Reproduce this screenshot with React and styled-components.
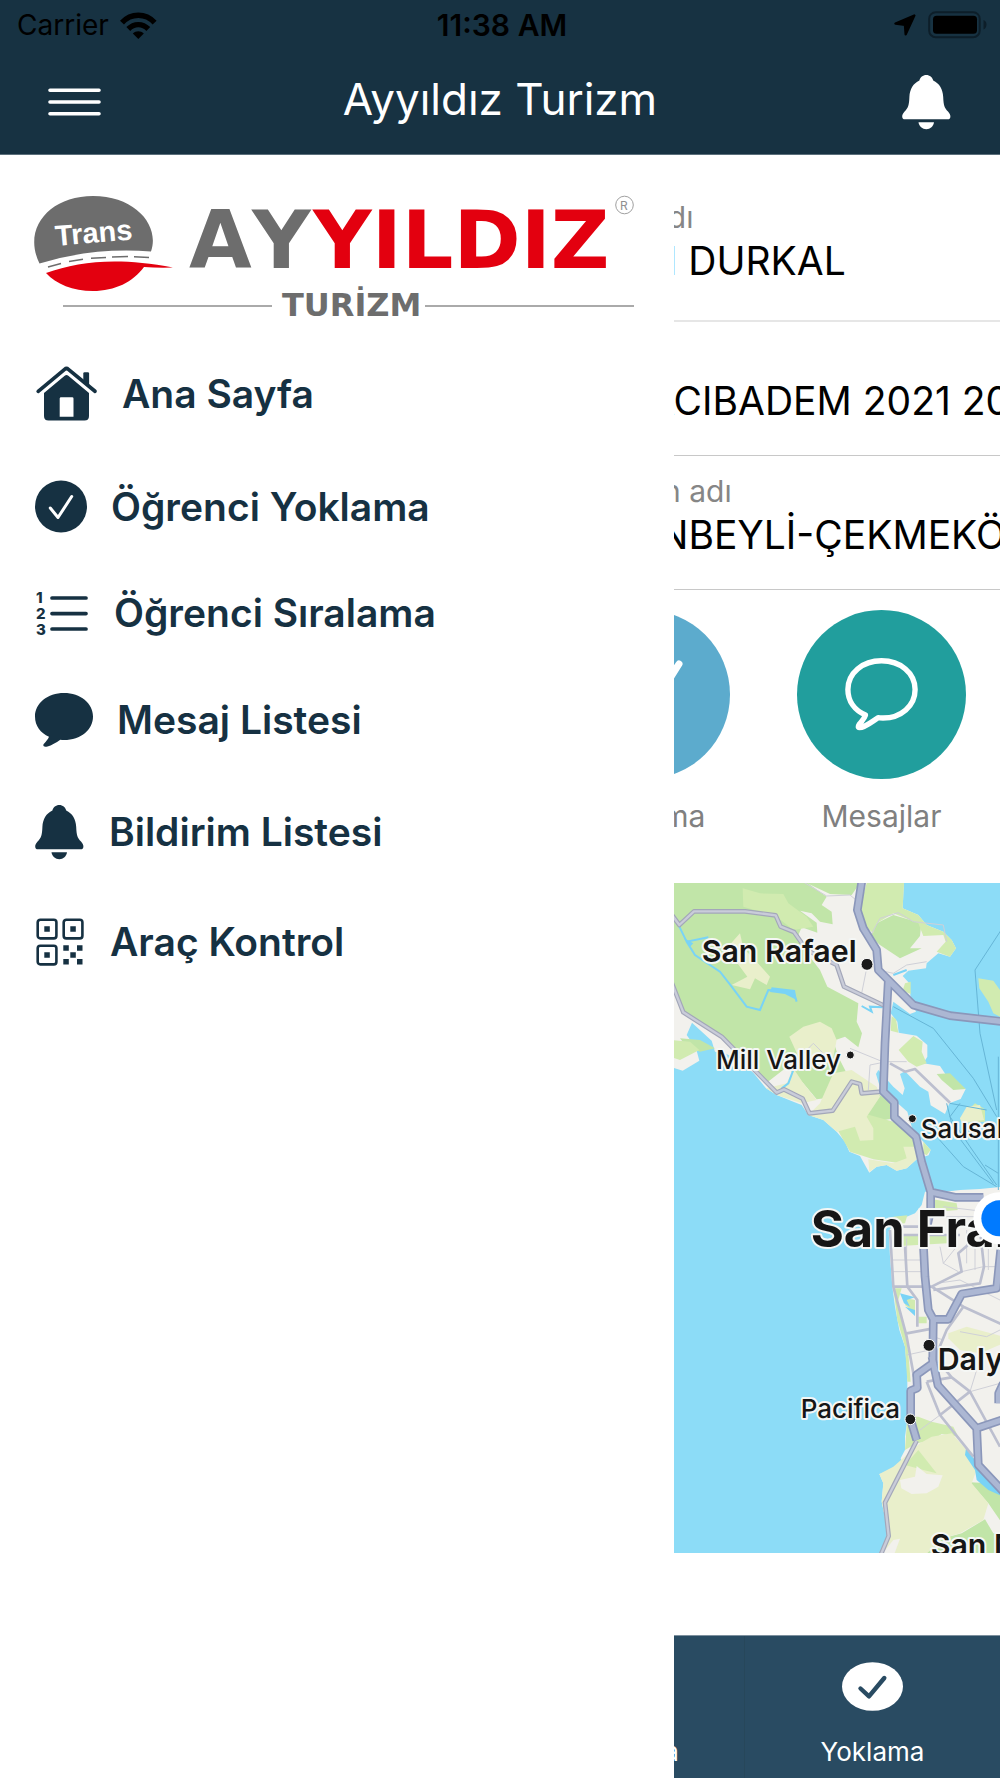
import React from 'react';
import styled, { createGlobalStyle } from 'styled-components';

const GlobalStyle = createGlobalStyle`
  * {
    box-sizing: border-box;
  }

  body {
    margin: 0;
    background: #ffffff;
    font-family: Inter, 'Liberation Sans', sans-serif;
    color: #000000;
  }

  svg {
    display: block;
    flex-shrink: 0;
  }
`;

const Screen = styled.div`
  display: flex;
  flex-direction: column;
  min-height: 100vh;
`;

const Header = styled.header`
  background-color: #173242;
  border-bottom: 1px solid #5b6f7b;
`;

const StatusBar = styled.div`
  display: grid;
  grid-template-columns: 1fr auto 1fr;
  align-items: center;
  height: 50px;
  padding: 0 13px 0 17px;
  font-size: 28px;
`;

const StatusGroup = styled.div`
  display: flex;
  align-items: center;
  justify-content: ${(props) => (props.$end ? 'flex-end' : 'flex-start')};
  gap: 11px;
`;

const Clock = styled.time`
  font-size: 30px;
  font-weight: 600;
`;

const NavBar = styled.div`
  display: grid;
  grid-template-columns: 1fr auto 1fr;
  align-items: center;
  height: 104px;
  padding: 0 48px;
`;

const NavTitle = styled.h1`
  margin: 0;
  padding-bottom: 6px;
  font-size: 44px;
  font-weight: 400;
  line-height: 56px;
  color: #ffffff;
`;

const IconButton = styled.button`
  justify-self: ${(props) => (props.$end ? 'end' : 'start')};
  padding: 0;
  border: none;
  background: none;
  color: #ffffff;
  cursor: pointer;
`;

const Body = styled.div`
  display: grid;
  grid-template-columns: 67.4% minmax(0, 1fr);
  flex: 1;
`;

const Drawer = styled.aside`
  padding: 36px 40px 40px 35px;
`;

const Menu = styled.nav`
  display: flex;
  flex-direction: column;
  align-items: flex-start;
  gap: 56px;
  padding-top: 37px;
`;

const MenuLink = styled.a`
  display: flex;
  align-items: center;
  gap: 24px;
  font-size: 39px;
  font-weight: 600;
  line-height: 48px;
  color: #163142;
  text-decoration: none;
  white-space: nowrap;
`;

const Content = styled.main`
  display: flex;
  flex-direction: column;
  overflow: hidden;
`;

const InfoRow = styled.section`
  padding: ${(props) => (props.$first ? '42px 0 35px' : '15px 0 30px')};
  border-bottom: ${(props) => (props.$first ? '2px solid #e6e6e6' : '1px solid #c8c8c8')};
  white-space: nowrap;
`;

// $under is how far the line runs below the open drawer
const InfoLabel = styled.div`
  min-height: 40px;
  margin-left: ${(props) => -props.$under}px;
  font-size: 30px;
  line-height: 40px;
  color: #868686;
`;

const InfoValue = styled.div`
  margin-left: ${(props) => -props.$under}px;
  font-size: 39px;
  line-height: 48px;
`;

const Shortcuts = styled.div`
  display: flex;
  justify-content: flex-end;
  gap: 67px;
  padding: 20px 34px 45px 0;
`;

const Shortcut = styled.button`
  display: flex;
  flex-direction: column;
  align-items: center;
  flex-shrink: 0;
  gap: 15px;
  padding: 0;
  border: none;
  background: none;
  font: inherit;
  font-size: 30px;
  line-height: 44px;
  color: #808080;
  cursor: pointer;
`;

const ShortcutDisc = styled.span`
  display: grid;
  place-items: center;
  width: 169px;
  height: 169px;
  border-radius: 50%;
  background-color: ${(props) => props.$color};
`;

const MapBox = styled.div`
  flex: 1;
  min-height: 0;
  margin-bottom: 82px;

  svg {
    width: 100%;
    height: 100%;
  }
`;

const TabBar = styled.nav`
  display: flex;
  justify-content: flex-end;
  height: 144px;
  background-color: #294b62;
  border-top: 1px solid #7d909e;
`;

const Tab = styled.a`
  display: flex;
  flex-direction: column;
  align-items: center;
  flex: 0 0 256px;
  gap: 23px;
  padding-top: 26px;
  border-left: 1px solid #27475a;
  font-size: 26px;
  line-height: 36px;
  color: #ffffff;
  text-decoration: none;
`;

const WifiIcon = () => (
  <svg width="37" height="27" viewBox="0 0 37 27" fill="none" stroke="#000" strokeWidth="5.4">
    <path d="M2 10.6C11 .8 25.600 .8 34.600 10.600" />
    <path d="M8.300 17C14 11.200 22.600 11.200 28.300 17" />
    <path d="M18.300 27L12.800 21.600C16 18.400 20.600 18.400 23.800 21.600Z" fill="#000" stroke="none" />
  </svg>
);

const LocationIcon = () => (
  <svg width="22" height="22" viewBox="0 0 22 22">
    <path
      d="M20.300 1.500L1.500 9.500L11 10.800L11.700 20.300Z"
      fill="#000"
      stroke="#000"
      strokeWidth="2.400"
      strokeLinejoin="round"
    />
  </svg>
);

const BatteryIcon = () => (
  <svg width="60" height="28" viewBox="0 0 60 28">
    <rect x="2.200" y="1.200" width="50.500" height="25" rx="6.500" fill="none" stroke="#0d1e29" strokeWidth="2" />
    <rect x="6" y="4.700" width="44" height="18" rx="3.500" fill="#000" />
    <path d="M56.500 9C60.500 10 60.500 17 56.500 18.500Z" fill="#0d1e29" />
  </svg>
);

const MenuIcon = () => (
  <svg width="53" height="28" viewBox="0 0 53 28" stroke="#fff" strokeWidth="3.600" strokeLinecap="round">
    <path d="M2 2.200H51M2 14H51M2 25.700H51" />
  </svg>
);

const BellIcon = () => (
  <svg width="50" height="58" viewBox="0 -2 50 58" fill="currentColor">
    <path d="M24.300 0C27.800 0 30.300 2.300 31.200 5.500C37.300 8.300 40.800 14 41.200 22C41.600 30.500 42.300 32.600 46 36.600C47.800 38.600 48.400 40 48.400 41.700C48.400 43.400 47.300 44.300 45.600 44.300H3C1.300 44.300 .2 43.400 .2 41.700C.2 40 .8 38.600 2.600 36.600C6.300 32.600 7 30.500 7.400 22C7.800 14 11.300 8.300 17.400 5.500C18.300 2.300 20.800 0 24.300 0Z" />
    <path d="M16.500 47.300H32C31.500 51.500 28.200 54.200 24.300 54.200S17 51.500 16.500 47.300Z" />
  </svg>
);

const HomeIcon = () => (
  <svg width="63" height="60" viewBox="0 -1 63 60" fill="currentColor">
    <path
      d="M3.200 26.300L29.600 4.300Q31.500 2.700 33.400 4.300L60 26.300"
      fill="none"
      stroke="currentColor"
      strokeWidth="3.700"
      strokeLinecap="round"
    />
    <path d="M48.300 15V8.600Q48.300 7.300 49.600 7.300H52.800Q54.100 7.300 54.100 8.600V20.500Z" />
    <path
      fillRule="evenodd"
      d="M9 28L29.700 10.800Q31.500 9.300 33.300 10.800L54 28V51Q54 55.500 49.500 55.500H13.500Q9 55.500 9 51ZM26 32.300Q24.700 32.300 24.700 33.600V51.700H38.500V33.600Q38.500 32.300 37.200 32.300Z"
    />
  </svg>
);

const CheckIcon = () => (
  <svg width="52" height="53" viewBox="0 0 52 53">
    <circle cx="26" cy="26.500" r="26" fill="currentColor" />
    <path
      d="M15.300 28L23 37.500L36.700 16.500"
      fill="none"
      stroke="#fff"
      strokeWidth="3"
      strokeLinecap="round"
      strokeLinejoin="round"
    />
  </svg>
);

const NumberedListIcon = () => (
  <svg width="55" height="48" viewBox="0 0 55 48" fill="currentColor" overflow="visible">
    <path d="M17 9H51M17 24.600H51M17 40H51" stroke="currentColor" strokeWidth="3.700" strokeLinecap="round" />
    <g fontSize="15" fontWeight="800">
      <text x="1" y="14">1</text>
      <text x="1" y="30">2</text>
      <text x="1" y="46">3</text>
    </g>
  </svg>
);

const ChatIcon = () => (
  <svg width="58" height="54" viewBox="0 0 58 54" fill="currentColor">
    <path d="M29 0C45.500 0 58 10.300 58 23.500S46 47 29 47C27.800 47 26.500 47 25.300 46.700C21 49.700 16.500 52.400 12.500 53.400C10 54 8.300 53.700 8.300 52.300C8.300 50.500 12.500 48 14 43.800C5.500 40 0 33 0 23.500C0 10.300 12.500 0 29 0Z" />
  </svg>
);

const QrIcon = () => (
  <svg width="51" height="50" viewBox="0 0 51 50" fill="currentColor">
    <g fill="none" stroke="currentColor" strokeWidth="2.600">
      <rect x="2.700" y="2.700" width="18.700" height="18.700" rx="2.600" />
      <rect x="28.700" y="2.700" width="18.700" height="18.700" rx="2.600" />
      <rect x="2.700" y="28.700" width="18.700" height="18.700" rx="2.600" />
    </g>
    <path d="M9.300 9.300h5.500v5.500h-5.500zM35.300 9.300h5.500v5.500h-5.500zM9.300 35.300h5.500v5.500h-5.500z" />
    <path d="M28.300 28.300h5.500v5.500h-5.500zM42 28.300h5.500v5.500h-5.500zM35.300 35.200h5.500v5.500h-5.500zM28.300 42h5.500v5.500h-5.500zM42 42h5.500v5.500h-5.500z" />
  </svg>
);

const ChatOutlineIcon = () => (
  <svg width="73" height="73" viewBox="0 0 73 73" fill="none" stroke="#fff" strokeWidth="5.400" strokeLinejoin="round">
    <path d="M20.500 57C9.500 52.300 2.900 43 2.900 31.500C2.900 15 17.500 2.800 36.500 2.800S70.100 15 70.100 31.500S56 60 38 60C36 60 34.500 60 33 59.700C27 63.500 20 69.500 14.500 69.600C12.500 69.600 13.500 67.500 14.500 66C17 62.800 19.500 60.500 20.500 57Z" />
  </svg>
);

const CheckMarkIcon = () => (
  <svg width="74" height="74" viewBox="0 0 74 74" fill="none" stroke="#fff" strokeWidth="7" strokeLinecap="round">
    <path d="M16 42L32 66L70 6" strokeLinejoin="round" />
  </svg>
);

const TabCheckIcon = () => (
  <svg width="61" height="49" viewBox="0 0 61 49">
    <ellipse cx="30.500" cy="24.500" rx="30.500" ry="24.300" fill="#fff" />
    <path
      d="M18.500 26.500L27 34.300L42.300 16"
      fill="none"
      stroke="#294b62"
      strokeWidth="4.400"
      strokeLinecap="round"
      strokeLinejoin="round"
    />
  </svg>
);

const Logo = () => (
  <svg width="100%" viewBox="35 191 599 136" role="img" aria-label="Ayyıldız Turizm" overflow="visible">
    <path d="M39.500 263.500C22 228 50 196 93 196S160 226 151 251.500Q93 247 39.500 263.500Z" fill="#6d6d6d" />
    <path d="M46 273C80 261 118 257 173 267.500Q158 268 144 267C133 282 115 291 93 291C73 291 56 284 46 273Z" fill="#e3000f" />
    <path
      d="M48 267L61 263.500M69 261.500L83 259.200M91 258.200L106 257.500M112 257L128 256.500M134 256.800L149 257.400"
      stroke="#6d6d6d"
      strokeWidth="1.500"
    />
    <text
      x="56"
      y="246"
      fill="#fff"
      fontFamily="'Liberation Sans', sans-serif"
      fontSize="29"
      fontWeight="700"
      transform="rotate(-5 56 246)"
    >
      Trans
    </text>
    <g fontFamily="'DejaVu Sans', sans-serif" fontWeight="700">
      <text x="189 252" y="268" fill="#6d6d6d" fontSize="81">AY</text>
      <text x="313" y="268" fill="#e3000f" fontSize="81">YILDIZ</text>
      <text x="282" y="316" fill="#6d6d6d" fontSize="32">TURİZM</text>
    </g>
    <path d="M63 306H272M425 306H634" stroke="#8e8e8e" strokeWidth="1.500" />
    <circle cx="624.500" cy="205" r="8.800" fill="none" stroke="#a0a0a0" />
    <text x="620" y="209.500" fill="#909090" fontSize="12">R</text>
  </svg>
);

const majorRoads =
  'M606 30L592 120L610 175L650 240L655 300L685 330L760 405L870 437L1030 455M685 330L675 520L670 665L703 697L703 742L768 800L785 875L812 966L885 982L970 982M812 966V1020L790 1120L795 1220L805 1320L820 1348H865L905 1272L1010 1255L1022 1140M820 1348L818 1480L770 1514L772 1554L752 1562V1650L770 1710M816 1460L834 1546L950 1675L955 1785L1030 1865M950 1675L1030 1648M1030 1540L1016 1570V1600';

const mediumRoads =
  'M36 135L58 165L102 124H255L347 136L362 170L402 186L440 240L530 285L552 350L675 408M36 340L70 427L185 500L350 668L372 658L428 686L448 730L518 722L575 635L600 642L605 670L665 665M770 1712L675 1898L686 1998L660 2060';

const streets =
  'M690 1080L700 1250L740 1400L762 1520M735 1130L742 1250L772 1290V1370M700 1250L815 1250L905 1205L895 1150L930 1120M740 1390L820 1375M815 1250L910 1310L1030 1365M910 1310L860 1380L835 1440L832 1480M700 1070H830M720 1095H900M960 1080L972 1190L960 1240L820 1260M800 1535L875 1522L930 1565L1020 1730M800 1535L840 1635L940 1760M930 1565L840 1635M875 1522L840 1480M690 580L735 605L765 597L870 698';

const BayMap = () => (
  <svg viewBox="42 39 978 2010" preserveAspectRatio="xMinYMin slice" role="img" aria-label="Harita">
    <rect x="0" y="0" width="1200" height="2200" fill="#8cdcf7" />

    {/* urban ground */}
    <g fill="#f2f1ed">
      <path d="M30 30H732L728 115L775 135L800 165L850 185L875 210L888 235L870 260L835 250L800 280L798 295L745 302L728 318L748 340L752 385L768 425L750 432L700 395L692 430L712 455L716 488L770 497L802 525V560L790 580L840 588L860 618L917 657L902 687L868 700L855 732L812 706L805 665L780 650L735 604L720 612L734 655L728 675L700 650L655 600L648 612L658 645L702 690L742 725L758 780L790 815L812 840L806 856L772 866L740 895L710 902L680 885L650 890L628 908L612 880L600 858L568 845L555 815L530 785L490 750L445 735L425 705L400 695L350 675L318 655L280 608L240 575L200 552L165 545L155 512L96 458L80 495L108 535L118 572L68 602L30 590Z" />
      <path d="M795 965L850 966L900 960L960 957L1030 950V2060H655L685 1990L665 1895L670 1840L658 1812L700 1805L728 1785L722 1765L735 1740V1700L742 1650V1510L735 1430L718 1380L705 1310L697 1250L690 1160L686 1085L700 1060L740 1040L765 1030L785 1005Z" />
    </g>

    {/* parks and hills */}
    <g fill="#c1e5a8">
      <path d="M30 30H430L500 80L485 105L515 125L518 163L480 155L455 130L420 122L470 158L472 188L425 172L413 200L432 238L480 300L502 350L595 400L590 455L606 490L595 532L555 500L520 512L535 560L560 610L530 680L470 688L430 640L380 592L318 640L240 545L180 495L70 425L30 340Z" />
      <path d="M440 39H600L575 75L510 72Z" />
      <path d="M650 160L700 135L784 160L780 198L750 235L785 235L720 265L660 225L632 200Z" />
      <path d="M615 735L655 672L700 700L705 745L660 752Z" />
      <path d="M830 612L870 610L917 657L880 660L845 630Z" />
      <path d="M930 1837L990 1840L1030 1885V1965L985 1900Z" />
      <path d="M785 2060L850 2005L905 1990L975 1948L1000 1990H1030V2060Z" />
      <path d="M60 505L120 510L165 535L120 545L80 530Z" />
    </g>
    <g fill="#d1ebb0">
      <path d="M248 55L300 70L370 72L385 100L440 140L460 170L400 180L350 140L250 110Z" />
      <path d="M620 39H732L728 115L775 135L800 165L850 185L875 210L888 235L870 260L830 245L857 215L850 195L790 198L775 160L700 130L650 160L640 190L605 160L600 110Z" />
      <path d="M735 340L752 335L752 372L728 362Z" />
      <path d="M695 438L708 448L715 488L692 482Z" />
      <path d="M716 540L760 498L788 515L785 545L800 580L770 590L745 575Z" />
      <path d="M30 510L90 515L118 540L60 570L30 560Z" />
      <path d="M530 775L610 730L700 755L765 800L770 850L720 880L640 868L570 845Z" />
      <path d="M790 815L812 840L800 856L790 850Z" />
      <path d="M955 325L1000 332L1020 360V440L1000 430L985 395L958 355Z" />
      <path d="M800 985L890 1000L893 1020L830 1025L800 1010Z" />
      <path d="M700 1040L742 1036L735 1060L700 1062ZM716 1098L860 1094L862 1120L720 1128Z" />
      <path d="M700 1255L725 1255L712 1300L735 1380L745 1450L752 1535L742 1535L735 1430L712 1350Z" />
      <path d="M740 1285L765 1290V1330L735 1305ZM775 1340H800V1360H775Z" />
      <path d="M742 1640L775 1640L815 1655L880 1670L895 1700L845 1692L815 1712L770 1720L735 1740Z" />
      <path d="M722 1780L765 1745L800 1770L825 1810L770 1790Z" />
      <path d="M900 745L945 700L975 718V755L910 758Z" />
    </g>
    <g fill="#e9efcb">
      <path d="M240 190L250 235L285 270L330 320L320 345L285 325L270 358L215 345L262 320L225 270L195 240Z" />
      <path d="M388 500L430 470L480 455L515 475L530 510L520 560L470 600L420 570Z" />
      <path d="M318 655L380 640L400 595L430 640L470 690L425 700L350 675Z" />
      <path d="M480 700L520 610L575 600L650 650L660 680L620 740L640 775V810L600 812L585 770L530 785L490 750L445 735Z" />
      <path d="M628 905L625 868L700 880L740 865L730 830L770 830L772 866L740 895L710 902L680 885L650 890Z" />
      <path d="M900 745L920 710L960 705L972 750L905 758Z" />
      <path d="M865 1390L920 1370L1030 1400V1420L960 1450L900 1440L865 1405Z" />
      <path d="M700 1790L780 1720L815 1700L875 1690L915 1735L950 1800L935 1840L985 1900L970 1950L900 1990L850 2005L790 2060H655L685 1990L665 1895L670 1840L658 1812Z" />
    </g>
    <path d="M735 1785L775 1740L830 1810L790 1800Z" fill="#d1ebb0" />
    <path d="M720 1830L765 1820L770 1788L800 1812L848 1816L835 1850L800 1870L755 1872L724 1855ZM660 2060L700 2010L720 2006L700 2060Z" fill="#f2f1ed" />

    {/* reservoirs and inlets */}
    <path
      d="M58 170L80 215L145 202M80 215L105 255L180 305L215 350L260 410L300 420L325 360L400 365L410 395M400 600L385 640L365 655M605 408L635 425L630 410L668 412M700 315L740 300"
      fill="none"
      stroke="#79d3f6"
      strokeWidth="6"
    />
    <path d="M335 352L405 360L410 390L375 372L330 366ZM72 205L100 220L90 230ZM918 1735L960 1790L1030 1860V1880L985 1860L950 1830L945 1800L915 1755Z" fill="#79d3f6" />
    <path d="M720 1270L765 1282L740 1290L750 1310L732 1300ZM735 1310L765 1320V1338Z" fill="#79d3f6" />

    {/* ferry lines */}
    <path
      d="M1030 170L945 300L960 490L1010 720M700 410L820 475L940 625L1010 740M830 800L910 890L1010 950M860 700L880 780L1000 940M900 700L870 740L930 830L1010 945M870 700L980 720M1015 560V960M975 885L1015 910"
      fill="none"
      stroke="#66b5d6"
      strokeWidth="3"
    />

    {/* local streets */}
    <g fill="none" stroke="#cfd0d8" strokeWidth="3">
      <path d="M420 30L500 78L570 75L600 100M630 200L660 145L715 128L760 155L850 165L860 215M605 370L618 305M655 300L700 310L740 285L800 275M740 575L680 575L630 585L625 660M380 600L460 520L520 580M570 535L680 580" />
      <path d="M695 1170H785M697 1205H790M740 1105V1230M840 1130L850 1180L895 1205M850 1180L890 1130M830 1240L900 1230L1020 1290M905 1205L970 1190H1020M920 1080V1180M945 1070V1200M985 1130V1200M850 1010L1020 1030M830 1040H1020M740 1455L810 1440M900 1385L980 1400L1020 1380M950 1500L930 1565L1020 1540M780 1680L840 1635M870 1600L960 1680L1000 1650M850 1410L820 1400" />
    </g>
    <g fill="none" strokeLinejoin="round">
      <path d={streets} stroke="#bcbfcf" strokeWidth="8" />
      <path d={mediumRoads} stroke="#a3a7b9" strokeWidth="14" />
      <path d={mediumRoads} stroke="#c9ccd9" strokeWidth="7" />
      <path d={majorRoads} stroke="#8b97ba" strokeWidth="26" />
      <path d={majorRoads} stroke="#acb7d3" strokeWidth="16" />
    </g>

    <g fill="#1a1a1a" stroke="#ffffff" strokeWidth="3">
      <circle cx="621" cy="283" r="18" />
      <circle cx="571" cy="555" r="12" />
      <circle cx="757" cy="746" r="12" />
      <circle cx="807" cy="1426" r="18" />
      <circle cx="751" cy="1648" r="16" />
    </g>
    <g fill="#161616" stroke="#f5f7f5" strokeWidth="12" strokeLinejoin="round" paintOrder="stroke">
      <g fontSize="91" fontWeight="600">
        <text x="125" y="277">San Rafael</text>
        <text x="833" y="1500">Daly City</text>
        <text x="812" y="2058">San Mateo</text>
      </g>
      <g fontSize="78" fontWeight="500">
        <text x="168" y="597">Mill Valley</text>
        <text x="782" y="805">Sausalito</text>
        <text x="422" y="1643">Pacifica</text>
      </g>
      <text x="452" y="1130" fontSize="152" fontWeight="700">San Francisco</text>
    </g>

    <circle cx="1018" cy="1045" r="78" fill="#ffffff" />
    <circle cx="1018" cy="1045" r="54" fill="#007aff" />
  </svg>
);

const menuItems = [
  { label: 'Ana Sayfa', Icon: HomeIcon },
  { label: 'Öğrenci Yoklama', Icon: CheckIcon },
  { label: 'Öğrenci Sıralama', Icon: NumberedListIcon },
  { label: 'Mesaj Listesi', Icon: ChatIcon },
  { label: 'Bildirim Listesi', Icon: BellIcon },
  { label: 'Araç Kontrol', Icon: QrIcon },
];

const App = () => {
  return (
    <Screen>
      <GlobalStyle />
      <Header>
        <StatusBar>
          <StatusGroup>
            Carrier
            <WifiIcon />
          </StatusGroup>
          <Clock>11:38 AM</Clock>
          <StatusGroup $end>
            <LocationIcon />
            <BatteryIcon />
          </StatusGroup>
        </StatusBar>
        <NavBar>
          <IconButton aria-label="Menü">
            <MenuIcon />
          </IconButton>
          <NavTitle>Ayyıldız Turizm</NavTitle>
          <IconButton $end aria-label="Bildirimler">
            <BellIcon />
          </IconButton>
        </NavBar>
      </Header>

      <Body>
        <Drawer>
          <Logo />
          <Menu>
            {menuItems.map(({ label, Icon }) => (
              <MenuLink key={label} href="#">
                <Icon />
                {label}
              </MenuLink>
            ))}
          </Menu>
        </Drawer>

        <Content>
          <InfoRow $first>
            <InfoLabel $under={23}>adı</InfoLabel>
            <InfoValue $under={26}>N DURKAL</InfoValue>
          </InfoRow>
          <InfoRow>
            <InfoLabel $under={0} />
            <InfoValue $under={26}>ACIBADEM 2021 2022</InfoValue>
          </InfoRow>
          <InfoRow>
            <InfoLabel $under={11}>n adı</InfoLabel>
            <InfoValue $under={15}>NBEYLİ-ÇEKMEKÖY</InfoValue>
          </InfoRow>

          <Shortcuts>
            <Shortcut>
              <ShortcutDisc $color="#5cabcd">
                <CheckMarkIcon />
              </ShortcutDisc>
              Yoklama
            </Shortcut>
            <Shortcut>
              <ShortcutDisc $color="#219e9d">
                <ChatOutlineIcon />
              </ShortcutDisc>
              Mesajlar
            </Shortcut>
          </Shortcuts>

          <MapBox>
            <BayMap />
          </MapBox>

          <TabBar>
            <Tab href="#">
              <TabCheckIcon />
              Ana Sayfa
            </Tab>
            <Tab href="#">
              <TabCheckIcon />
              Yoklama
            </Tab>
          </TabBar>
        </Content>
      </Body>
    </Screen>
  );
};

export default App;
